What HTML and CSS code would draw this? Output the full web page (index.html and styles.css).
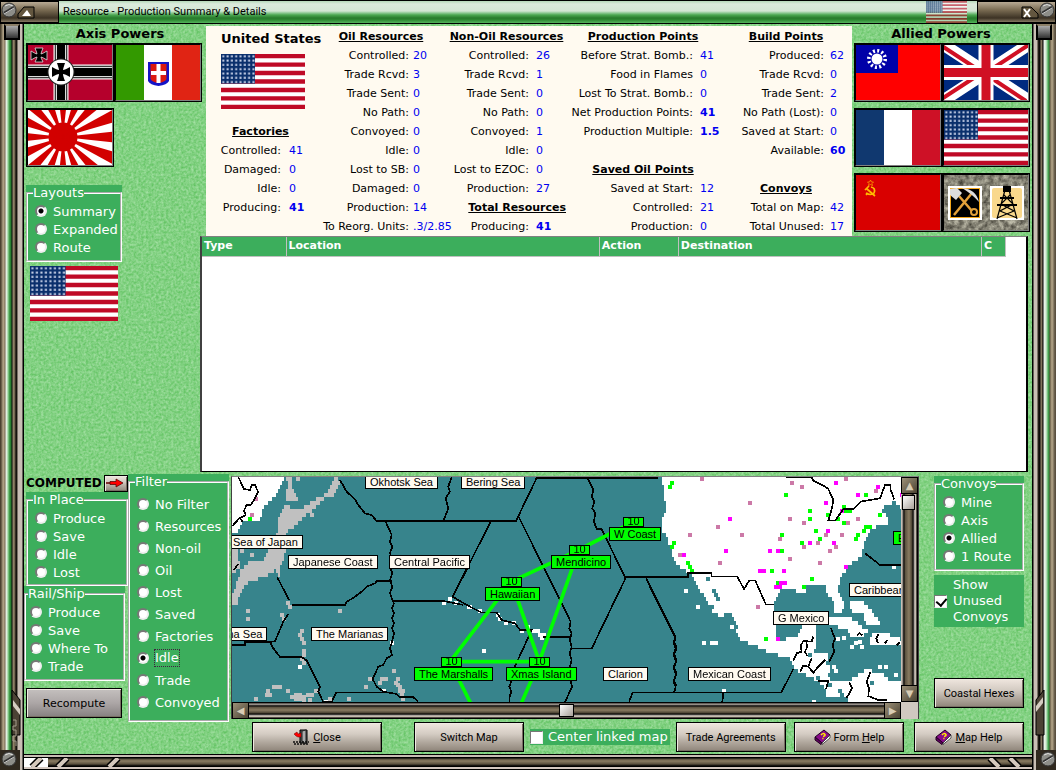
FILE: index.html
```html
<!DOCTYPE html>
<html lang="en">
<head>
<meta charset="utf-8">
<title>Resource - Production Summary &amp; Details</title>
<link rel="stylesheet" href="styles.css">
</head>
<body>
<svg class="defs" width="0" height="0" aria-hidden="true">
  <defs>
    <filter id="grain" x="0" y="0" width="100%" height="100%" color-interpolation-filters="sRGB">
      <feTurbulence type="fractalNoise" baseFrequency="0.4" numOctaves="2" seed="4"/>
      <feColorMatrix values="0.36 0 0 0 0.33  0.16 0 0 0 0.74  0.36 0 0 0 0.33  0 0 0 0 1"/>
    </filter>
    <filter id="rock" x="0" y="0" width="100%" height="100%" color-interpolation-filters="sRGB">
      <feTurbulence type="fractalNoise" baseFrequency="0.2" numOctaves="4" seed="9"/>
      <feColorMatrix values="0.7 0 0 0 0.17  0.7 0 0 0 0.16  0.65 0 0 0 0.13  0 0 0 0 1"/>
    </filter>
    <pattern id="stars" width="4.3" height="4.3" patternUnits="userSpaceOnUse"><rect width="4.3" height="4.3" fill="#0a2f6c"/><rect x="1.3" y="1.3" width="2" height="2" fill="#c9d3ea"/></pattern>
    <symbol id="us" viewBox="0 0 84 55" preserveAspectRatio="none">
      <rect width="84" height="55" fill="#fff"/>
      <path d="M0 2.1H84M0 10.6H84M0 19H84M0 27.5H84M0 36H84M0 44.4H84M0 52.9H84" stroke="#bf0a26" stroke-width="4.4"/>
      <rect width="34" height="29.6" fill="url(#stars)"/>
    </symbol>
    <symbol id="de" viewBox="0 0 84 55" preserveAspectRatio="none">
      <rect width="84" height="55" fill="#b5002c"/>
      <path d="M33 0V55M0 27H84" stroke="#fff" stroke-width="15"/>
      <path d="M33 0V55M0 27H84" stroke="#000" stroke-width="12.5"/>
      <path d="M33 0V55M0 27H84" stroke="#ddd" stroke-width="10.5"/>
      <path d="M33 0V55M0 27H84" stroke="#000" stroke-width="8"/>
      <circle cx="33" cy="27" r="13.5" fill="#222"/><circle cx="33" cy="27" r="12.5" fill="#fff"/>
      <path id="cross" d="M29 18H37Q35 24 35 25Q37 25 42 22V32Q37 29 35 29Q35 31 37 36H29Q31 31 31 29Q29 29 24 32V22Q29 25 31 25Q31 24 29 18Z"/>
      <path d="M7 3H15Q13 8 13 9Q14 9 19 6V15Q14 12 13 12Q13 13 15 17H7Q9 13 9 12Q8 12 3 15V6Q8 9 9 9Q9 8 7 3Z" stroke="#ddd" stroke-width=".8"/>
    </symbol>
    <symbol id="it" viewBox="0 0 84 55" preserveAspectRatio="none">
      <rect width="84" height="55" fill="#fff"/><rect width="28" height="55" fill="#339900"/><rect x="56" width="28" height="55" fill="#e02414"/>
      <path d="M32 17H53V36Q51 40 42.500 41Q34 40 32 36Z" fill="#1414c8"/><path d="M34.500 19H50.500V34Q49 37 42.500 38Q36 37 34.500 34Z" fill="#dc1a10"/>
      <path d="M42.500 19V38M35 28H50" stroke="#fff" stroke-width="4"/>
    </symbol>
    <symbol id="jp" viewBox="0 0 84 55" preserveAspectRatio="none">
      <rect width="84" height="55" fill="#fff"/><circle cx="35" cy="27" r="14.500" fill="#d20000"/>
      <g id="rays" fill="#d20000"></g>
    </symbol>
    <symbol id="cn" viewBox="0 0 84 55" preserveAspectRatio="none">
      <rect width="84" height="55" fill="#f00"/><rect width="42" height="28" fill="#0000a8"/>
      <circle cx="21" cy="14" r="8.200" fill="none" stroke="#fff" stroke-width="3.600" stroke-dasharray="2 2.290"/><circle cx="21" cy="14" r="5.500" fill="#fff"/>
    </symbol>
    <symbol id="uk" viewBox="0 0 84 55" preserveAspectRatio="none">
      <rect width="84" height="55" fill="#002a80"/>
      <path d="M0 0L84 55M84 0L0 55" stroke="#fff" stroke-width="12"/>
      <path d="M-2 1L40 28.500M86 -1L44 26.500M82 56L42 29.500M-1 53L42 25" stroke="#d01024" stroke-width="4"/>
      <path d="M42 0V55M0 27.500H84" stroke="#fff" stroke-width="15"/><path d="M42 0V55M0 27.500H84" stroke="#d01024" stroke-width="9"/>
    </symbol>
    <symbol id="fr" viewBox="0 0 84 55" preserveAspectRatio="none"><rect width="84" height="55" fill="#fff"/><rect width="28" height="55" fill="#10386f"/><rect x="56" width="28" height="55" fill="#ce1126"/></symbol>
    <symbol id="su" viewBox="0 0 84 55" preserveAspectRatio="none">
      <rect width="84" height="55" fill="#d90000"/>
      <path d="M15 12Q20 13 18 18Q15 21 10 18M11 14L19 21M9 15L13 11M10 20L12 18" fill="none" stroke="#fb0" stroke-width="1.700"/><path d="M14.500 5L15.500 7H17.500L16 8.500L16.500 10.500L14.500 9.500L12.500 10.500L13 8.500L11.500 7H13.500Z" fill="none" stroke="#fa0" stroke-width=".7"/>
    </symbol>
    <symbol id="neutral" viewBox="0 0 84 55" preserveAspectRatio="none">
      <rect width="84" height="55" filter="url(#rock)"/>
      <rect x="4" y="11" width="34" height="34" fill="#fff"/><rect x="6.500" y="13.500" width="29" height="29" fill="#000" stroke="#f5a81c"/>
      <path d="M10 40L28 18M15 21L28 36" stroke="#e3a13a" stroke-width="2.500"/><path d="M18 13Q32 14 35 27Q28 19 18 13Z" fill="#ddd"/><path d="M6 14L13 13L18 18L12 25L6 20Z" fill="#ddd"/><circle cx="30" cy="37" r="3" fill="none" stroke="#e3a13a" stroke-width="2"/>
      <rect x="46" y="11" width="34" height="34" fill="#fff"/><rect x="48" y="13" width="30" height="30" rx="2" fill="#f9d88c"/>
      <path d="M60 12H66V16H60ZM53 30H73M56 23H70" stroke="#000" stroke-width="2"/><path d="M61 15L53 44M65 15L73 44M60 20L69 29L56 36L73 43M66 20L57 29L70 36L53 43" stroke="#000" stroke-width="1.200" fill="none"/>
    </symbol>
    <symbol id="book" viewBox="0 0 17 16">
      <path d="M1 8L10 1L16 6L8 14Z" fill="#8a0a8a" stroke="#200020"/><path d="M1 8V11L7 15.500L8 14Z" fill="#600060" stroke="#200020"/><path d="M8 14L16 6V9L8 15.500Z" fill="#fff" stroke="#333" stroke-width=".8"/>
      <path d="M7 6Q9 3.500 11 5.500Q11.500 7 9 7.500M8.300 9.500H9.500" stroke="#fe0" stroke-width="1.500" fill="none"/>
    </symbol>
    <symbol id="door" viewBox="0 0 17 16">
      <path d="M7 1H14V14H7Z" fill="#555" stroke="#000"/><path d="M9 2L13 1V15L9 12Z" fill="#aaa" stroke="#222"/>
      <path d="M1 5L4 3L5 5L8 4V8L5 8L3 7Z" fill="#f00" stroke="#600" stroke-width=".5"/><path d="M0 13H16M1 15H16" stroke="#111" stroke-width="1.500" stroke-dasharray="2 1"/>
    </symbol>
    <symbol id="screw" viewBox="0 0 16 16"><circle cx="8" cy="8" r="7" fill="#8d8d88" stroke="#333"/><path d="M4 4Q8 1 12 4" stroke="#ddd" fill="none"/><path d="M3 11L13 5" stroke="#333" stroke-width="2.500"/><path d="M3 12L13 6" stroke="#eee" stroke-width=".8"/></symbol>
  </defs>
</svg>

<div class="window">
  <header class="titlebar">
    <div class="cap cap-left"><svg class="screw" width="16" height="16"><use href="#screw"/></svg><button class="cap-btn" aria-label="Roll up"><svg width="18" height="13"><path d="M1 12V8L7 1H17V12Z" fill="#63563f" stroke="#000"/><path d="M5 10H14L10 4Z" fill="#fff"/></svg></button></div>
    <h1>Resource - Production Summary &amp; Details</h1>
    <svg class="title-flag" width="41" height="22"><use href="#us"/></svg>
    <div class="cap cap-right"><button class="cap-btn" aria-label="Close window"><svg width="18" height="13"><path d="M1 1H10L17 8V12H1Z" fill="#63563f" stroke="#000"/><path d="M3 3L9 11M9 3L3 11" stroke="#fff" stroke-width="2"/></svg></button><svg class="screw" width="16" height="16"><use href="#screw"/></svg></div>
  </header>

  <div class="rail rail-left"><span class="knob"></span><svg width="24" height="90" viewBox="0 0 24 90"><path d="M12 10V55H20V20Z" fill="#4b4234" stroke="#000"/><path d="M13 20L20 29V35L13 26Z" fill="#d4ccc0"/><path d="M13 40H16V46H13V50H16V56H13V61H16V66" stroke="#a59d8c" fill="none"/><path d="M0 70H20V90H0Z" fill="#30291f"/><use href="#screw" x="1" y="71" width="16" height="16"/></svg></div>

  <main class="content">
    <svg class="texture" width="100%" height="100%" aria-hidden="true"><rect width="100%" height="100%" filter="url(#grain)"/></svg>

    <section class="axis">
      <h2>Axis Powers</h2>
      <div class="flags">
        <button class="flag" aria-label="Germany"><svg><use href="#de"/></svg></button><button class="flag" aria-label="Italy"><svg><use href="#it"/></svg></button>
        <button class="flag" aria-label="Japan"><svg><use href="#jp"/></svg></button>
      </div>
      <div class="panel layouts">
        <fieldset><legend>Layouts</legend>
          <label><input type="radio" name="layout" checked>Summary</label>
          <label><input type="radio" name="layout">Expanded</label>
          <label><input type="radio" name="layout">Route</label>
        </fieldset>
      </div>
      <svg class="current" width="88" height="55"><use href="#us"/></svg>
    </section>

    <section class="stats">
      <div class="col col-a">
        <div class="nation"><h2>United States</h2><svg width="84" height="55"><use href="#us"/></svg></div>
        <h3>Factories</h3>
        <dl><dt>Controlled:</dt><dd>41</dd><dt>Damaged:</dt><dd>0</dd><dt>Idle:</dt><dd>0</dd><dt>Producing:</dt><dd><b>41</b></dd></dl>
      </div>
      <div class="col col-b">
        <h3>Oil Resources</h3>
        <dl><dt>Controlled:</dt><dd>20</dd><dt>Trade Rcvd:</dt><dd>3</dd><dt>Trade Sent:</dt><dd>0</dd><dt>No Path:</dt><dd>0</dd><dt>Convoyed:</dt><dd>0</dd><dt>Idle:</dt><dd>0</dd><dt>Lost to SB:</dt><dd>0</dd><dt>Damaged:</dt><dd>0</dd><dt>Production:</dt><dd>14</dd><dt>To Reorg. Units:</dt><dd>.3/2.85</dd></dl>
      </div>
      <div class="col col-c">
        <h3>Non-Oil Resources</h3>
        <dl><dt>Controlled:</dt><dd>26</dd><dt>Trade Rcvd:</dt><dd>1</dd><dt>Trade Sent:</dt><dd>0</dd><dt>No Path:</dt><dd>0</dd><dt>Convoyed:</dt><dd>1</dd><dt>Idle:</dt><dd>0</dd><dt>Lost to EZOC:</dt><dd>0</dd><dt>Production:</dt><dd>27</dd></dl>
        <h3 class="end">Total Resources</h3>
        <dl><dt>Producing:</dt><dd><b>41</b></dd></dl>
      </div>
      <div class="col col-d">
        <h3>Production Points</h3>
        <dl class="gap-after"><dt>Before Strat. Bomb.:</dt><dd>41</dd><dt>Food in Flames</dt><dd>0</dd><dt>Lost To Strat. Bomb.:</dt><dd>0</dd><dt>Net Production Points:</dt><dd><b>41</b></dd><dt>Production Multiple:</dt><dd><b>1.5</b></dd></dl>
        <h3>Saved Oil Points</h3>
        <dl><dt>Saved at Start:</dt><dd>12</dd><dt>Controlled:</dt><dd>21</dd><dt>Production:</dt><dd>0</dd></dl>
      </div>
      <div class="col col-e">
        <h3>Build Points</h3>
        <dl class="gap-after"><dt>Produced:</dt><dd>62</dd><dt>Trade Rcvd:</dt><dd>0</dd><dt>Trade Sent:</dt><dd>2</dd><dt>No Path (Lost):</dt><dd>0</dd><dt>Saved at Start:</dt><dd>0</dd><dt>Available:</dt><dd><b>60</b></dd></dl>
        <h3>Convoys</h3>
        <dl><dt>Total on Map:</dt><dd>42</dd><dt>Total Unused:</dt><dd>17</dd></dl>
      </div>
    </section>

    <section class="allied">
      <h2>Allied Powers</h2>
      <div class="flags">
        <button class="flag" aria-label="China"><svg><use href="#cn"/></svg></button><button class="flag" aria-label="United Kingdom"><svg><use href="#uk"/></svg></button>
        <button class="flag" aria-label="France"><svg><use href="#fr"/></svg></button><button class="flag" aria-label="United States"><svg><use href="#us"/></svg></button>
        <button class="flag" aria-label="Soviet Union"><svg><use href="#su"/></svg></button><button class="flag" aria-label="Resources"><svg><use href="#neutral"/></svg></button>
      </div>
    </section>

    <section class="list">
      <table>
        <colgroup><col class="w-type"><col class="w-loc"><col class="w-act"><col class="w-dest"><col class="w-c"></colgroup>
        <thead><tr><th>Type</th><th>Location</th><th>Action</th><th>Destination</th><th>C</th></tr></thead>
      </table>
    </section>

    <section class="lower">
      <div class="modes">
        <div class="computed"><h2>COMPUTED</h2><button class="btn arrow" aria-label="Toggle computed"><svg width="20" height="10"><path d="M0 5H9" stroke="#600" stroke-width="1.500"/><path d="M4 3.500H10V1L17 5L10 9V6.500H4Z" fill="#f00" stroke="#400" stroke-width=".7"/></svg></button></div>
        <div class="panel in-place"><fieldset><legend>In Place</legend>
          <label><input type="radio" name="place">Produce</label><label><input type="radio" name="place">Save</label><label><input type="radio" name="place">Idle</label><label><input type="radio" name="place">Lost</label>
        </fieldset></div>
        <div class="panel rail-ship"><fieldset><legend>Rail/Ship</legend>
          <label><input type="radio" name="ship">Produce</label><label><input type="radio" name="ship">Save</label><label><input type="radio" name="ship">Where To</label><label><input type="radio" name="ship">Trade</label>
        </fieldset></div>
        <button class="btn recompute">Recompute</button>
      </div>

      <div class="panel filter"><fieldset><legend>Filter</legend>
        <label><input type="radio" name="filter">No Filter</label><label><input type="radio" name="filter">Resources</label><label><input type="radio" name="filter">Non-oil</label><label><input type="radio" name="filter">Oil</label><label><input type="radio" name="filter">Lost</label><label><input type="radio" name="filter">Saved</label><label><input type="radio" name="filter">Factories</label><label><input type="radio" name="filter" checked><span class="focus">Idle</span></label><label><input type="radio" name="filter">Trade</label><label><input type="radio" name="filter">Convoyed</label>
      </fieldset></div>

      <div class="mapbox">
        <div class="map">
          <canvas id="terrain" width="669" height="225"></canvas>
          <svg class="lines" width="669" height="225" shape-rendering="crispEdges" fill="none" stroke="#000" stroke-width="5">
            <g transform="translate(-2 -7) scale(.3333)">
              <path d="M25 21L42 57L60 60L65 45L75 45L84 65L72 90L62 105L50 105L42 122L47 135L28 145L8 167M12 300L24 282M30 145L38 155M5 526H45V516H120L135 514L160 455L175 432M120 516L130 535L150 561H215L230 572L270 650L265 665L280 697M142 322L177 390M185 405H345L350 396L375 380L395 365L410 350L435 340L440 333H485M330 30L350 65L375 88L385 105L405 130L425 135L440 153H710L640 153L655 115L647 85L660 65L655 50L665 21M467 155L485 195L480 215L487 230L480 250L487 270L480 290L487 310L480 330L487 350L480 370L487 390L492 400L486 415L492 430L486 445L492 460L486 475L492 490L486 515L480 535L486 555L470 565L460 585L445 590L428 627L440 650L460 665L500 672L510 682H550L565 695M490 393H640L700 405M668 380L720 280M275 697H305L318 668H460"/>
            </g>
            <g transform="translate(208 -7) scale(.3333)">
              <path d="M8 153H228L290 24H655M152 155L38 380L80 405L125 428H170L185 450L225 460L240 480H275L220 600L208 620L214 635L208 650L214 665L209 680V697M235 138L392 455L388 475L395 490L389 510L395 530L389 550L395 570L390 590L396 610L391 630L396 650L375 697M443 24L460 60L455 80L463 95L457 115L466 130L462 155L470 177H485L555 322H720M558 322L455 536H390M618 325L707 500L702 515L709 530L702 550L709 570L702 590L709 610L702 630L708 645L703 668M308 501H390M567 695L578 668H720"/>
              <path d="M580 155L416 240L214 335L30 575H298L214 335M416 240L298 575L244 700M30 575L92 700" stroke="#0f0" stroke-width="11" shape-rendering="auto"/>
            </g>
            <g transform="translate(418 -7) scale(.3333)">
              <path d="M0 321H115V310H185V320H262L282 357L298 332H316L348 404H372M408 21H485L490 32L520 47L535 57L550 90L546 115L535 152H555L580 118H610L632 95L690 85L705 45H722V60L733 88M645 250L665 265L690 285H755M0 350L77 505L72 520L78 540L71 555L78 575L71 595L78 615L71 635L77 650L72 667M0 668H394L430 597M220 670L217 695M543 475L555 507L548 525L553 545L537 575M430 573L440 550L455 545L452 528L460 513L485 515L490 500M468 512L472 530L465 545L472 558M450 605L460 587L475 590L485 565M475 590L490 608L505 590L525 570M505 633H535L528 657M598 637L606 655L590 684M662 605L650 635L657 655L655 678L685 690H710M620 497L628 489L638 496M686 492L679 505L684 520M705 520L712 510M740 526L750 516"/>
            </g>
          </svg>
          <div class="pins">
            <span class="sea" style="left:133px;top:-2px">Okhotsk Sea</span>
            <span class="sea" style="left:229px;top:-2px">Bering Sea</span>
            <span class="sea" style="left:-4px;top:58px">Sea of Japan</span>
            <span class="sea" style="left:56px;top:78px">Japanese Coast</span>
            <span class="sea" style="left:157px;top:78px">Central Pacific</span>
            <span class="sea" style="left:-26px;top:150px">China Sea</span>
            <span class="sea" style="left:79px;top:150px">The Marianas</span>
            <span class="sea" style="left:371px;top:190px">Clarion</span>
            <span class="sea" style="left:456px;top:190px">Mexican Coast</span>
            <span class="sea" style="left:541px;top:134px">G Mexico</span>
            <span class="sea" style="left:617px;top:106px">Caribbean Sea</span>
            <span class="sea port" style="left:182px;top:190px">The Marshalls</span><span class="count" style="left:209px;top:180px">10</span>
            <span class="sea port" style="left:253px;top:110px">Hawaiian</span><span class="count" style="left:269px;top:100px">10</span>
            <span class="sea port" style="left:319px;top:78px">Mendicino</span><span class="count" style="left:337px;top:68px">10</span>
            <span class="sea port" style="left:377px;top:50px">W Coast</span><span class="count" style="left:391px;top:40px">10</span>
            <span class="sea port" style="left:274px;top:190px">Xmas Island</span><span class="count" style="left:297px;top:180px">10</span>
            <span class="sea port" style="left:661px;top:54px">E Coast</span>
          </div>
        </div>
        <div class="vbar"><button aria-label="Scroll up">▲</button><div class="track"><span class="thumb"></span></div><button aria-label="Scroll down">▼</button></div>
        <div class="hbar"><button aria-label="Scroll left">◀</button><div class="track"><span class="thumb"></span></div><button aria-label="Scroll right">▶</button></div>
        <div class="corner"></div>
      </div>

      <div class="side">
        <div class="panel"><fieldset><legend>Convoys</legend>
          <label><input type="radio" name="convoys">Mine</label><label><input type="radio" name="convoys">Axis</label><label><input type="radio" name="convoys" checked>Allied</label><label><input type="radio" name="convoys">1 Route</label>
        </fieldset></div>
        <label class="check unused"><input type="checkbox" checked><span>Show<br>Unused<br>Convoys</span></label>
        <button class="btn coastal">Coastal Hexes</button>
      </div>
    </section>

    <footer class="actions">
      <button class="btn close"><svg width="17" height="16"><use href="#door"/></svg><span><u>C</u>lose</span></button>
      <button class="btn switch">Switch Map</button>
      <label class="check linked"><input type="checkbox">Center linked map</label>
      <button class="btn trade">Trade Agreements</button>
      <button class="btn form"><svg width="17" height="16"><use href="#book"/></svg><span>Form <u>H</u>elp</span></button>
      <button class="btn maphelp"><svg width="17" height="16"><use href="#book"/></svg><span><u>M</u>ap Help</span></button>
    </footer>
  </main>

  <div class="rail rail-right"><span class="knob"></span><svg width="24" height="90" viewBox="0 0 24 90"><path d="M12 10V55H4V20Z" fill="#4b4234" stroke="#000"/><path d="M11 17L4 26V32L11 23Z" fill="#d4ccc0"/><path d="M4 70H24V90H4Z" fill="#30291f"/><use href="#screw" x="8" y="71" width="16" height="16"/></svg></div>

  <div class="sill"><svg width="110" height="9"><path d="M0 0H24V9H0Z" fill="#fff"/><path d="M8 9L17 0M34 9L43 0M85 9L94 0" stroke="#000" stroke-width="7"/><path d="M8 9L17 0M34 9L43 0M85 9L94 0" stroke="#d4c8bc" stroke-width="4"/></svg><svg width="50" height="9"><path d="M8 0L17 9M28 0L37 9" stroke="#000" stroke-width="7"/><path d="M8 0L17 9M28 0L37 9" stroke="#d4c8bc" stroke-width="4"/></svg></div>
</div>
<script src="map.js"></script>
</body>
</html>
```

FILE: styles.css
```css
* { box-sizing: border-box; }
html, body { height: 100%; margin: 0; }
body { font: 11px/19px "DejaVu Sans", Verdana, sans-serif; color: #000; background: #7fd07f; }
h1, h2, h3, dl, dd, dt { margin: 0; font-size: inherit; }
svg { display: block; flex: none; }
button { font: inherit; color: inherit; padding: 0; }
.defs { position: absolute; }

.window { min-height: 100vh; display: grid; grid-template: 24px 1fr 16px / 24px minmax(0, 1fr) 24px; }

/* Title bar */
.titlebar { grid-column: 1 / -1; display: flex; align-items: stretch; border-top: 1px solid #000; border-bottom: 1px solid #000;
  background: linear-gradient(#b4d8b8 0, #dbeadc 3px, #d3e6d4 10px, #8cc892 12px, #4aa650 14px, #277a2c 17px, #2f8a34 19px, #55b45c 22px); }
.titlebar h1 { flex: 1; padding-left: 4px; font: 11px/22px Roboto, Arial, sans-serif; }
.title-flag { margin-right: 10px; opacity: .6; }
.cap { display: flex; align-items: center; border: 1px solid #000; background: linear-gradient(#b8aa94, #796b52 40%, #3c3224 80%, #857862); }
.cap-left { width: 59px; }
.cap-right { width: 79px; justify-content: flex-end; }
.cap-btn { border: 0; background: none; }
.screw { align-self: flex-start; }

/* Window frame */
.rail { display: flex; flex-direction: column; justify-content: space-between; align-items: center; }
.rail-left { grid-row: 2 / 4; background: linear-gradient(to right, #4a4130 1px, #8c8068 2px, #b8a98c 4px, #6a5e48 5px, #f0f4ee 6px, #d0ecd0 7px, #58b060 9px, #2b8233 10px, #2b8233 11px, #000 12px, #9a8c70 13px, #6a5e48 15px, #000 16px, #2a241a 17px, #c8beb4 18px, #c8beb4 22px, #000 23px); }
.rail-right { grid-row: 2 / 4; grid-column: 3; background: linear-gradient(to right, #000 1px, #c8beb4 2px, #c8beb4 5px, #2a241a 6px, #000 8px, #9a8c70 9px, #6a5e48 10px, #000 11px, #f0f4ee 12px, #d0ecd0 14px, #58b060 16px, #2b8233 17px, #6a5e48 18px, #b8a98c 20px, #5a5040 23px); }
.knob { width: 16px; height: 16px; border: 2px solid #000; border-top-color: #8c8068; background: linear-gradient(#aaa, #333); }
.sill { grid-row: 3; grid-column: 2; display: flex; justify-content: space-between; padding-top: 4px;
  background: linear-gradient(#000 1px, #c8beb4 1px, #c8beb4 3px, #000 3px, #000 4px, #5a503e 5px, #8a7c62 7px, #5a503e 10px, #000 12px, #000 13px, #d4c8c0 13px, #d4c8c0 15px, #000 15px); }

/* Content */
.content { position: relative; grid-row: 2; grid-column: 2; display: grid; grid-template: auto minmax(120px, 1fr) auto auto / 174px minmax(0, 1fr) 174px; padding: 0 4px 2px 2px; }
.content > * { position: relative; }
.content > .texture { position: absolute; inset: 0; }
.axis { grid-row: 1 / 3; }
.axis h2, .allied h2 { font-size: 13px; text-align: center; line-height: 19px; }
.axis h2 { padding-left: 14px; }
.flags { display: flex; flex-wrap: wrap; row-gap: 6px; width: 176px; }
.flag { width: 88px; height: 59px; border: 1px solid #000; background: #000; }
.flag svg { width: 100%; height: 100%; border: 1px solid; border-color: #000 #808080 #808080 #000; }
.layouts { width: 96px; margin-top: 18px; }
.current { margin: 4px; }

/* Production figures */
.stats { display: grid; grid-template-columns: minmax(0, 109fr) minmax(0, 132fr) minmax(0, 119fr) minmax(0, 154fr) minmax(0, 132fr); margin: 2px 2px 0 6px; padding-top: 1px; background: #fffaf0; }
.stats h3 { text-align: center; text-decoration: underline; white-space: nowrap; }
.stats h3.end { text-align: right; }
.stats dl { display: grid; white-space: nowrap; }
.gap-after { margin-bottom: 19px; }
dt { text-align: right; }
dd { color: #0000f0; }
.nation { height: 95px; padding-left: 15px; }
.nation h2 { font-size: 13px; line-height: 23px; white-space: nowrap; }
.nation svg { margin-top: 4px; }
.col-a dl { grid-template-columns: minmax(0, 1fr) 26px; column-gap: 8px; }
.col-b dl { grid-template-columns: minmax(0, 1fr) 34px; column-gap: 4px; }
.col-c dl { grid-template-columns: minmax(0, 1fr) 30px; column-gap: 7px; }
.col-d dl { grid-template-columns: minmax(0, 1fr) 20px; column-gap: 7px; }
.col-e dl { grid-template-columns: minmax(0, 1fr) 22px; column-gap: 6px; }

/* Resource list */
.list { grid-column: 2 / 4; padding-right: 20px; background: #fff; border: 1px solid; border-color: #808080 #000 #000 #404040; border-left-width: 2px; border-right-width: 2px; }
table { width: 100%; border-collapse: collapse; table-layout: fixed; }
th { height: 19px; padding: 0 2px; text-align: left; line-height: 18px; color: #fff; background: #3cae5c; border-right: 1px solid #c0c0c0; border-bottom: 1px solid #c0c0c0; }
.w-type { width: 84px; } .w-act { width: 79px; } .w-c { width: 24px; }
.w-loc { width: 39%; }

/* Option groups */
.panel { background: #3cae5c; color: #fff; font-size: 13px; }
fieldset { min-width: 0; margin: 0; padding: 1px 0 4px 7px; border: 2px groove #fff; }
legend { padding: 0; margin-left: -2px; line-height: 16px; }
.panel label { display: flex; align-items: center; gap: 6px; height: 18px; white-space: nowrap; }
input { appearance: none; flex: none; margin: 0; background: #fff; border: 2px solid; border-color: #777 #eee #eee #777; }
input[type="radio"] { width: 12px; height: 12px; border-radius: 50%; }
input[type="radio"]:checked { background: radial-gradient(circle, #000 2px, #fff 3px); }
input[type="checkbox"] { width: 13px; height: 13px; border-width: 1px; position: relative; }
input[type="checkbox"]:checked::after { content: ""; position: absolute; left: 3px; top: 0; width: 5px; height: 8px; border: solid #000; border-width: 0 2px 2px 0; transform: rotate(40deg); }
.check { display: flex; align-items: center; gap: 6px; background: #3cae5c; color: #fff; font-size: 13px; line-height: 16px; }
.focus { outline: 1px dotted #402040; line-height: 16px; }

/* Lower area */
.lower { grid-column: 1 / 4; display: flex; align-items: flex-start; margin-top: 2px; }
.modes { width: 102px; }
.computed { display: flex; align-items: center; justify-content: space-between; height: 18px; }
.computed h2 { font-size: 12px; }
.in-place fieldset { padding-bottom: 3px; }
.rail-ship { width: 101px; margin-left: -2px; }
.rail-ship fieldset { padding-left: 4px; }
.filter { width: 101px; }
.filter fieldset { padding: 3px 0 7px 7px; }
.filter label { height: 22px; }
.btn { display: flex; align-items: center; justify-content: center; gap: 3px; height: 30px; border: 1px solid #000; box-shadow: inset 1px 1px #efe9e2, inset -1px -1px #786e64; background: linear-gradient(#efe6de, #d3cbc2 40%, #b5aca2 65%, #8f857a); font: 11px Roboto, Arial, sans-serif; }
.btn.arrow { width: 24px; height: 17px; }
.btn.recompute { width: 96px; margin-top: 7px; font: inherit; background: linear-gradient(#c4c0be, #aca6a6 50%, #858080); }

.mapbox { flex: 1; min-width: 0; margin: 2px 15px 0 2px; display: grid; grid-template: 225px 17px / minmax(0, 1fr) 17px; border: 1px solid #404040; border-top-color: #808080; border-bottom: 0; }
.map { position: relative; overflow: hidden; background: #37848c; }
.lines, .pins { position: absolute; left: 0; top: 0; }
.sea, .count { position: absolute; border: 1px solid #000; background: #fffaf0; font: 11px/12px "Liberation Sans", Arial, sans-serif; white-space: nowrap; color: #000; }
.sea { padding: 0 4px; height: 14px; }
.port, .count { background: #0f0; }
.count { width: 21px; height: 10px; overflow: hidden; text-align: center; line-height: 7px; }
.vbar, .hbar { display: flex; background: #000; }
.vbar { flex-direction: column; }
.track { flex: 1; display: flex; }
.vbar .track { flex-direction: column; background: linear-gradient(to right, #c8beb4 1px, #000 3px, #5a503e 4px, #8a7c62 8px, #4a4232 11px, #000 12px, #e4dcd2 14px, #a89c8c 15px, #000 16px); }
.hbar .track { justify-content: center; background: linear-gradient(#000 1px, #c8beb4 2px, #000 4px, #5a503e 5px, #8a7c62 8px, #4a4232 11px, #000 12px, #e4dcd2 14px, #a89c8c 15px, #000 16px); }
.vbar button, .hbar button { width: 17px; height: 17px; border: 1px solid #000; background: linear-gradient(135deg, #9c9078, #4a4232); color: #d8ccb4; font: 10px/10px "DejaVu Sans", sans-serif; }
.thumb { border: 1px solid #000; background: linear-gradient(135deg, #fff, #a8a098); }
.vbar .thumb { width: 13px; height: 15px; margin: 1px; }
.hbar .thumb { width: 15px; height: 13px; margin: 2px; }
.corner { background: #d0c8c0; }

.side { width: 90px; margin-right: 4px; padding-top: 2px; }
.unused { margin-top: 4px; padding: 2px 0; }
.coastal { width: 100%; margin-top: 51px; }

.actions { grid-column: 1 / 4; display: flex; align-items: center; padding: 0 4px 0 226px; }
.close { width: 130px; margin-right: 32px; }
.switch, .trade, .form, .maphelp { width: 110px; }
.linked { margin: 0 6px; padding-right: 2px; white-space: nowrap; gap: 5px; }
.form { margin: 0 10px 0 auto; }
```

FILE: map.js
```js
// Terrain is drawn in cells two pixels wide and four high.
const ctx = document.getElementById('terrain').getContext('2d');
ctx.fillStyle = '#37848c';
ctx.fillRect(0, 0, 669, 225);

function land(ox, color, outline) {
  const n = outline.split(' ').map(p => p.split(',').map(Number));
  const path = new Path2D();
  n.forEach(([x, y], i) => path[i ? 'lineTo' : 'moveTo'](x / 3 + ox, y / 3 - 7));
  path.closePath();
  ctx.fillStyle = color;
  for (let y = 0; y < 225; y += 4)
    for (let x = 0; x < 669; x += 2)
      if (ctx.isPointInPath(path, x + 1, y + 2)) ctx.fillRect(x, y, 2, 4);
}
function dots(ox, color, list) {
  ctx.fillStyle = color;
  list.split(' ').forEach(p => {
    const [x, y] = p.split(',').map(Number);
    ctx.fillRect(Math.round(x / 3 + ox) - 2, Math.round(y / 3 - 7) - 2, 4, 4);
  });
}
const W = -2, C = 208, E = 418, grey = '#c0c0c0', white = '#fff';

land(W, white, '5,15 164,15 150,50 140,75 105,110 95,130 90,154 40,154 32,165 22,190 5,190');
land(W, grey, '170,15 185,15 190,60 205,90 165,90 172,50');
land(W, grey, '165,108 215,118 250,90 280,80 300,50 318,15 330,40 310,75 280,88 240,128 215,145 200,165 165,190 172,235 150,290 148,318 135,300 100,322 60,335 45,350 28,380 22,402 5,402 5,375 25,330 35,295 60,275 100,275 118,235 140,195 145,150');
land(W, grey, '5,235 25,245 28,290 5,315');
dots(W, grey, '203,27 246,135 66,255 36,243 54,423 54,447 174,399 180,411 156,435 162,447 330,423 216,483 210,495 216,507 222,519 222,543 222,555 216,567 222,579 138,651 150,651 132,651 114,663 120,675 110,675 78,687 174,663 186,681 198,675 210,675 198,687 210,687 222,681 234,675 246,675 222,690 258,663 240,690 300,687 357,687 492,603 504,627 498,639 504,645 510,663 516,675 520,687 408,651 420,627 456,627 468,627 450,639 510,651 520,663');
dots(W, white, '210,591 486,519 462,663 642,399 660,387 678,399 716,411 288,695');
dots(W, '#cc79a7', '78,87 66,135');
dots(W, '#0f0', '60,147');
dots(C, white, '90,411 120,423 174,435 180,447 198,459 222,459 246,483 264,471 282,483 294,483 300,495 306,505 312,495 132,543');
land(E, white, '36,15 40,60 46,95 46,120 38,150 38,185 50,200 60,230 70,265 90,295 125,310 130,325 145,360 160,375 180,410 190,430 220,440 225,425 245,430 255,455 265,465 260,485 270,512 315,525 350,545 420,565 435,600 455,610 500,632 530,655 530,680 590,683 595,700 760,700 760,635 720,635 700,610 650,600 615,620 595,635 545,635 530,620 545,600 525,575 540,560 525,545 490,550 480,560 500,535 495,470 460,468 440,500 385,512 375,470 370,440 372,400 390,357 438,357 438,369 470,369 470,345 525,345 532,375 550,390 555,430 575,430 585,400 565,360 575,315 600,285 635,260 640,230 660,175 710,165 715,140 695,130 700,110 735,95 760,120 760,15');
land(E, white, '525,445 605,445 625,460 655,485 640,500 600,495 595,480 560,470 530,470');
land(E, white, '665,490 700,488 755,510 755,530 700,525 660,522');
land(E, white, '590,385 615,395 640,395 670,430 690,460 650,465 640,435 610,425');
dots(E, white, '108,363 144,411 162,519 186,519 198,519 246,471 732,291 222,663 564,507 582,505 606,531 618,519 636,531 630,517 690,591 708,591 738,615 552,591 558,603 492,695');
dots(E, '#37848c', '174,327 192,363 198,375 204,387 186,411 480,555 540,645 570,663 576,675 666,639 504,625 566,590');
dots(E, '#0f0', '66,39 60,51 408,75 480,123 480,147 396,195 456,219 498,183 510,207 396,243 72,219 66,231 114,279 120,291 126,303 366,303 486,327 462,351 384,339 348,507 582,111 588,123 600,123 534,135 564,147 582,159 648,75 690,135 660,171 648,171 642,183 624,195 618,207');
dots(E, '#f0f', '558,39 684,51 624,75 528,99 576,123 240,147 534,183 480,219 552,219 228,243 360,243 384,243 102,255 330,303 342,303 402,303 394,339 406,339 378,351 390,351 588,291 384,507 755,75');
dots(E, '#cc79a7', '156,27 426,39 456,51 588,27 678,63 300,99 204,171 120,195 276,195 420,147 462,159 390,207 528,195 576,195 594,159 624,147 504,219 462,231 558,231 540,243 420,267 510,279 210,279 90,255 324,411');

// Sixteen rays of the naval ensign.
const rays = document.getElementById('rays');
for (let i = 0; i < 16; i++) {
  const a = i * Math.PI / 8, h = Math.PI / 32;
  const p = document.createElementNS('http://www.w3.org/2000/svg', 'path');
  const at = t => `${35 + 90 * Math.cos(t)} ${27 + 90 * Math.sin(t)}`;
  p.setAttribute('d', `M35 27L${at(a - h * 1.1)}L${at(a + h * 1.1)}Z`);
  rays.appendChild(p);
}
```
